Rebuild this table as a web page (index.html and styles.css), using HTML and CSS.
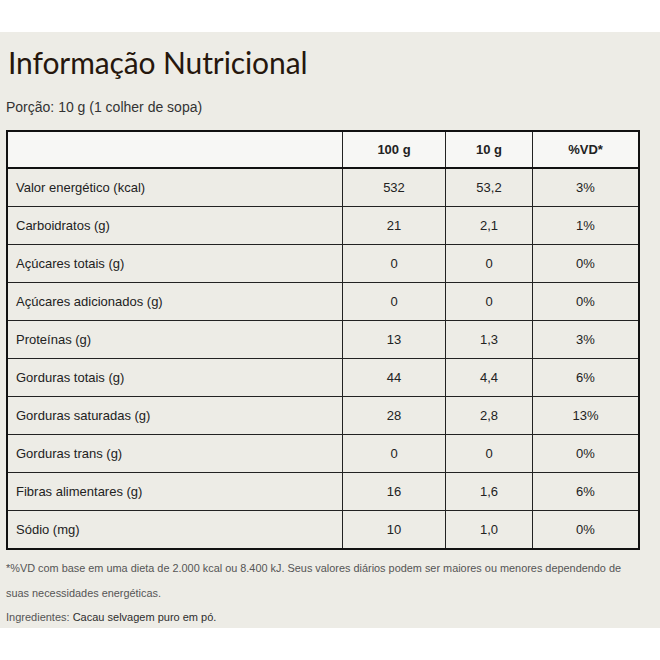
FILE: index.html
```html
<!DOCTYPE html>
<html lang="pt">
<head>
<meta charset="utf-8">
<title>Informação Nutricional</title>
<link rel="stylesheet" href="styles.css">
</head>
<body>
<div class="top-space"></div>
<section class="nutri">
  <h1 class="title">Informação Nutricional</h1>
  <p class="portion">Porção: 10 g (1 colher de sopa)</p>
  <table class="table">
    <thead>
      <tr><th class="name"></th><th>100 g</th><th>10 g</th><th>%VD*</th></tr>
    </thead>
    <tbody>
      <tr><td class="name">Valor energético (kcal)</td><td>532</td><td>53,2</td><td>3%</td></tr>
      <tr><td class="name">Carboidratos (g)</td><td>21</td><td>2,1</td><td>1%</td></tr>
      <tr><td class="name">Açúcares totais (g)</td><td>0</td><td>0</td><td>0%</td></tr>
      <tr><td class="name">Açúcares adicionados (g)</td><td>0</td><td>0</td><td>0%</td></tr>
      <tr><td class="name">Proteínas (g)</td><td>13</td><td>1,3</td><td>3%</td></tr>
      <tr><td class="name">Gorduras totais (g)</td><td>44</td><td>4,4</td><td>6%</td></tr>
      <tr><td class="name">Gorduras saturadas (g)</td><td>28</td><td>2,8</td><td>13%</td></tr>
      <tr><td class="name">Gorduras trans (g)</td><td>0</td><td>0</td><td>0%</td></tr>
      <tr><td class="name">Fibras alimentares (g)</td><td>16</td><td>1,6</td><td>6%</td></tr>
      <tr><td class="name">Sódio (mg)</td><td>10</td><td>1,0</td><td>0%</td></tr>
    </tbody>
  </table>
  <p class="note">*%VD com base em uma dieta de 2.000 kcal ou 8.400 kJ. Seus valores diários podem ser maiores ou menores dependendo de suas necessidades energéticas.</p>
  <p class="ingredients">Ingredientes: <span class="ing-value">Cacau selvagem puro em pó.</span></p>
</section>
</body>
</html>
```
FILE: styles.css
```css
html, body {
  margin: 0;
  padding: 0;
  background: #ffffff;
}
body {
  font-family: "Liberation Sans", Arial, sans-serif;
  color: #333333;
}
.top-space {
  height: 32px;
}
.nutri {
  background: #edece6;
  padding: 10px 20px 0 6px;
}
.title {
  margin: 0;
  padding-left: 2px;
  font-family: "Lato", sans-serif;
  font-weight: 400;
  font-size: 30px;
  line-height: 40px;
  letter-spacing: -0.1px;
  color: #26170d;
}
.portion {
  margin: 17px 0 0 0;
  font-size: 14px;
  line-height: 16px;
  color: #333333;
}
.table {
  margin-top: 15px;
  width: 634px;
  border-collapse: collapse;
  border: 2px solid #111111;
  font-size: 13px;
  color: #222222;
}
.table th, .table td {
  border: 1px solid #222222;
  height: 37px;
  padding: 0 8px;
  text-align: center;
  vertical-align: middle;
}
.table thead th {
  background: #f7f7f5;
  font-weight: bold;
  border-bottom: 2px solid #111111;
  height: 35px;
}
.table td {
  background: #edece6;
}
.table .name {
  text-align: left;
  width: 318px;
}
.table th:nth-child(2) { width: 86px; }
.table th:nth-child(3) { width: 70px; }
.note {
  margin: 6px 0 0 0;
  font-size: 10.9px;
  line-height: 25px;
  color: #555555;
}
.ingredients {
  margin: 0;
  font-size: 11px;
  line-height: 22px;
  color: #555555;
}
.ing-value {
  color: #2e2e2e;
}
```
